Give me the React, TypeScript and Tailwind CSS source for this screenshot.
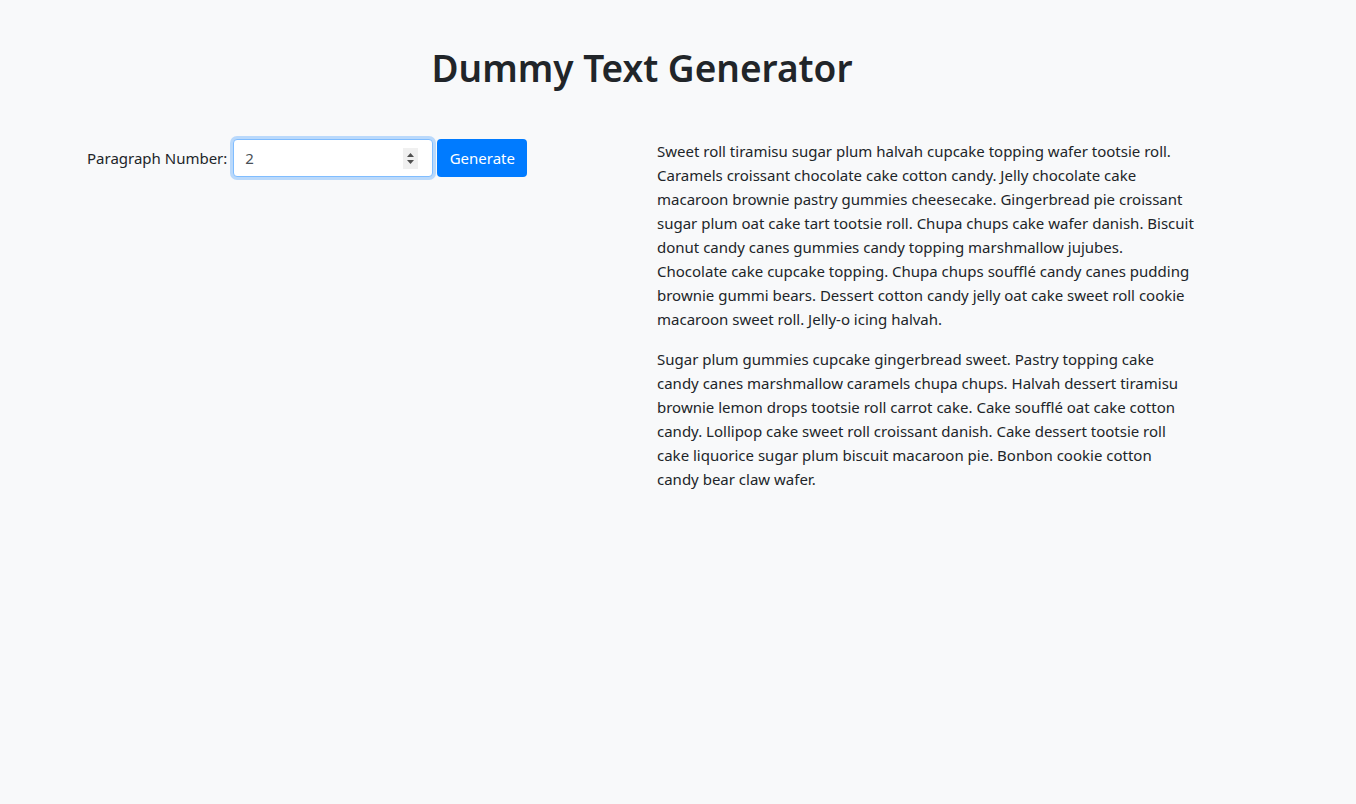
const para1 =
  "Sweet roll tiramisu sugar plum halvah cupcake topping wafer tootsie roll. Caramels croissant chocolate cake cotton candy. Jelly chocolate cake macaroon brownie pastry gummies cheesecake. Gingerbread pie croissant sugar plum oat cake tart tootsie roll. Chupa chups cake wafer danish. Biscuit donut candy canes gummies candy topping marshmallow jujubes. Chocolate cake cupcake topping. Chupa chups soufflé candy canes pudding brownie gummi bears. Dessert cotton candy jelly oat cake sweet roll cookie macaroon sweet roll. Jelly-o icing halvah.";
const para2 =
  "Sugar plum gummies cupcake gingerbread sweet. Pastry topping cake candy canes marshmallow caramels chupa chups. Halvah dessert tiramisu brownie lemon drops tootsie roll carrot cake. Cake soufflé oat cake cotton candy. Lollipop cake sweet roll croissant danish. Cake dessert tootsie roll cake liquorice sugar plum biscuit macaroon pie. Bonbon cookie cotton candy bear claw wafer.";

export default function App() {
  return (
    <div className="min-h-screen bg-[#f8f9fa] text-[#212529] font-['Noto_Sans',sans-serif] text-[15px] leading-[24px]">
      <div className="w-[1140px] ml-[72px] px-[15px] pt-[44px]">
        <h1 className="text-center text-[37px] leading-[48px] font-semibold mb-[47px] text-[#212529]">
          Dummy Text Generator
        </h1>
        <div className="flex -mx-[15px]">
          <div className="w-[570px] px-[15px]">
            <form className="flex items-center" onSubmit={(e) => e.preventDefault()}>
              <label className="mr-[6px]">Paragraph Number:</label>
              <div className="relative w-[200px] h-[38px] bg-white border border-[#80bdff] rounded-[4px] shadow-[0_0_0_3px_rgba(0,123,255,0.25)] flex items-center pl-[11px] text-[#495057]">
                <span>2</span>
                <div className="absolute right-[14px] top-[8px] w-[15px] h-[21px] bg-[#f0f0f0] flex flex-col items-center justify-center gap-[3px]">
                  <svg width="7" height="4" viewBox="0 0 7 4"><path d="M0 4 L3.5 0 L7 4 Z" fill="#505050" /></svg>
                  <svg width="7" height="4" viewBox="0 0 7 4"><path d="M0 0 L3.5 4 L7 0 Z" fill="#505050" /></svg>
                </div>
              </div>
              <button
                type="submit"
                className="ml-[4px] w-[90px] h-[38px] bg-[#007bff] text-white rounded-[4px] flex items-center justify-center"
              >
                Generate
              </button>
            </form>
          </div>
          <div className="w-[570px] px-[15px]">
            <p className="mb-[16px]">{para1}</p>
            <p className="mb-[16px]">{para2}</p>
          </div>
        </div>
      </div>
    </div>
  );
}
